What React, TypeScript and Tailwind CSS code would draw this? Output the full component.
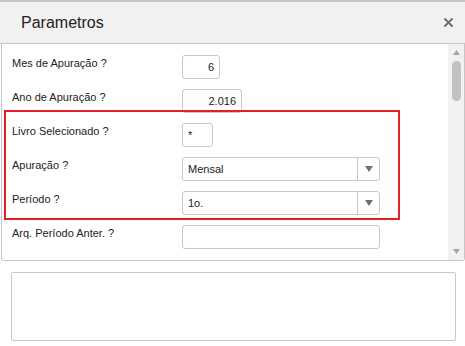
import React from 'react';

const font = { fontFamily: '"Liberation Sans", Arial, Helvetica, sans-serif' };

function Label({ children }: { children: React.ReactNode }) {
  return (
    <span className="w-[180px] shrink-0 pl-[10px] pt-[1px] text-[11px] leading-[14px] text-[#222]">
      {children}
    </span>
  );
}

function TextBox({ value, width, align = 'right' }: { value?: string; width: string; align?: 'left' | 'right' }) {
  return (
    <div
      className={`${width} h-[24px] rounded-[3px] border border-[#c8c8c8] bg-white flex items-center px-[5px] text-[11px] text-[#222] ${
        align === 'right' ? 'justify-end' : 'justify-start'
      }`}
    >
      {value}
    </div>
  );
}

function Select({ value }: { value: string }) {
  return (
    <div className="w-[198px] h-[24px] rounded-[3px] border border-[#c8c8c8] bg-white flex text-[11px] text-[#222]">
      <span className="flex-1 flex items-center pl-[5px]">{value}</span>
      <span className="w-[22px] border-l border-[#c8c8c8] flex items-center justify-center">
        <svg width="8" height="6" viewBox="0 0 8 6">
          <path d="M0 0 L8 0 L4 6 Z" fill="#6b6f7a" />
        </svg>
      </span>
    </div>
  );
}

export default function App() {
  return (
    <div className="w-[465px] h-[346px] bg-white overflow-hidden" style={font}>
      {/* Header */}
      <div className="border-t-2 border-b border-[#c6c6c6] h-[44px] bg-[#f1f1f1] flex items-center justify-between">
        <span className="pl-[21px] text-[16px] text-[#222] leading-none">Parametros</span>
        <svg className="mr-[12px]" width="9" height="9" viewBox="0 0 9 9">
          <path d="M1 1 L8 8 M8 1 L1 8" stroke="#666a73" strokeWidth="1.8" strokeLinecap="round" />
        </svg>
      </div>

      {/* Painel de perguntas */}
      <div className="ml-[1px] w-[464px] h-[217px] border border-t-0 border-[#c6c6c6] rounded-b-[3px] flex">
        <div className="relative flex-1 pt-[11px]">
          <div className="flex h-[34px]">
            <Label>Mes de Apuração ?</Label>
            <TextBox value="6" width="w-[38px]" />
          </div>
          <div className="flex h-[34px]">
            <Label>Ano de Apuração ?</Label>
            <TextBox value="2.016" width="w-[60px]" />
          </div>
          <div className="flex h-[34px]">
            <Label>Livro Selecionado ?</Label>
            <TextBox value="*" width="w-[31px]" align="left" />
          </div>
          <div className="flex h-[34px]">
            <Label>Apuração ?</Label>
            <Select value="Mensal" />
          </div>
          <div className="flex h-[34px]">
            <Label>Período ?</Label>
            <Select value="1o." />
          </div>
          <div className="flex h-[34px]">
            <Label>Arq. Período Anter. ?</Label>
            <TextBox width="w-[198px]" />
          </div>

          {/* destaque vermelho */}
          <div className="absolute left-[2px] top-[66px] w-[396px] h-[110px] border-2 border-[#e3202a] pointer-events-none" />
        </div>

        {/* scrollbar */}
        <div className="w-[16px] bg-[#f1f1f1] flex flex-col items-center">
          <svg className="mt-[6px]" width="7" height="5" viewBox="0 0 7 5">
            <path d="M3.5 0 L7 5 L0 5 Z" fill="#a3a3a3" />
          </svg>
          <div className="mt-[6px] w-[9px] h-[40px] rounded-[5px] bg-[#c1c1c1]" />
          <div className="flex-1" />
          <svg className="mb-[6px]" width="7" height="5" viewBox="0 0 7 5">
            <path d="M0 0 L7 0 L3.5 5 Z" fill="#a3a3a3" />
          </svg>
        </div>
      </div>

      {/* área inferior */}
      <div className="mt-[11px] ml-[11px] w-[445px] h-[69px] border border-[#c8c8c8] rounded-[2px]" />
    </div>
  );
}
